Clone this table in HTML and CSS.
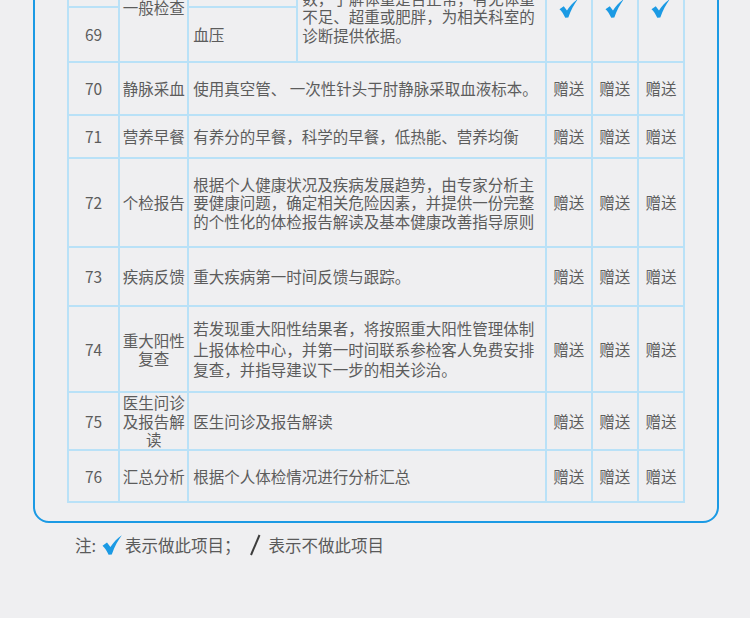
FILE: index.html
```html
<!DOCTYPE html>
<html lang="zh-CN">
<head>
  <meta charset="UTF-8">
  <meta name="viewport" content="width=device-width, initial-scale=1.0">
  <title>体检项目</title>
  <link rel="stylesheet" href="styles.css">
</head>
<body>
  <div class="page">
    <div class="panel">
      <table class="items">
        <colgroup>
          <col class="c-no">
          <col class="c-name">
          <col class="c-sub">
          <col class="c-desc">
          <col class="c-pkg">
          <col class="c-pkg">
          <col class="c-pkg">
        </colgroup>
        <tbody>
          <tr class="h55">
            <td>68</td>
            <td rowspan="2">一般检查</td>
            <td class="text">身高体重</td>
            <td class="text" rowspan="2">通过测量身高、体重，计算体重指数，了解体重是否正常，有无体重不足、超重或肥胖，为相关科室的诊断提供依据。</td>
            <td rowspan="2"><svg class="check" viewBox="0 0 20 20"><path d="M0.5 10.8L5 7.6L8.4 12C11.4 7.4 15.2 3 19.8 0.2C16.6 4.6 12.6 11 9.8 19.6L6.6 19.8C4.8 15.8 2.8 12.8 0.5 10.8Z"/></svg></td>
            <td rowspan="2"><svg class="check" viewBox="0 0 20 20"><path d="M0.5 10.8L5 7.6L8.4 12C11.4 7.4 15.2 3 19.8 0.2C16.6 4.6 12.6 11 9.8 19.6L6.6 19.8C4.8 15.8 2.8 12.8 0.5 10.8Z"/></svg></td>
            <td rowspan="2"><svg class="check" viewBox="0 0 20 20"><path d="M0.5 10.8L5 7.6L8.4 12C11.4 7.4 15.2 3 19.8 0.2C16.6 4.6 12.6 11 9.8 19.6L6.6 19.8C4.8 15.8 2.8 12.8 0.5 10.8Z"/></svg></td>
          </tr>
          <tr class="h55">
            <td>69</td>
            <td class="text">血压</td>
          </tr>
          <tr class="h53">
            <td>70</td>
            <td>静脉采血</td>
            <td class="text" colspan="2">使用真空管、 一次性针头于肘静脉采取血液标本。</td>
            <td>赠送</td><td>赠送</td><td>赠送</td>
          </tr>
          <tr class="h43">
            <td>71</td>
            <td>营养早餐</td>
            <td class="text" colspan="2">有养分的早餐，科学的早餐，低热能、营养均衡</td>
            <td>赠送</td><td>赠送</td><td>赠送</td>
          </tr>
          <tr class="h89">
            <td>72</td>
            <td>个检报告</td>
            <td class="text" colspan="2">根据个人健康状况及疾病发展趋势，由专家分析主要健康问题，确定相关危险因素，并提供一份完整的个性化的体检报告解读及基本健康改善指导原则</td>
            <td>赠送</td><td>赠送</td><td>赠送</td>
          </tr>
          <tr class="h59">
            <td>73</td>
            <td>疾病反馈</td>
            <td class="text" colspan="2">重大疾病第一时间反馈与跟踪。</td>
            <td>赠送</td><td>赠送</td><td>赠送</td>
          </tr>
          <tr class="h86">
            <td>74</td>
            <td>重大阳性复查</td>
            <td class="text loose" colspan="2">若发现重大阳性结果者，将按照重大阳性管理体制上报体检中心，并第一时间联系参检客人免费安排复查，并指导建议下一步的相关诊治。</td>
            <td>赠送</td><td>赠送</td><td>赠送</td>
          </tr>
          <tr class="h58">
            <td>75</td>
            <td>医生问诊及报告解读</td>
            <td class="text" colspan="2">医生问诊及报告解读</td>
            <td>赠送</td><td>赠送</td><td>赠送</td>
          </tr>
          <tr class="h52">
            <td>76</td>
            <td>汇总分析</td>
            <td class="text" colspan="2">根据个人体检情况进行分析汇总</td>
            <td>赠送</td><td>赠送</td><td>赠送</td>
          </tr>
        </tbody>
      </table>
    </div>

    <p class="legend">
      <span>注:</span>
      <svg class="check legend-check" viewBox="0 0 20 20"><path d="M0.5 10.8L5 7.6L8.4 12C11.4 7.4 15.2 3 19.8 0.2C16.6 4.6 12.6 11 9.8 19.6L6.6 19.8C4.8 15.8 2.8 12.8 0.5 10.8Z"/></svg>
      <span>表示做此项目；</span>
      <svg class="slash" viewBox="0 0 12 22"><line x1="10.5" y1="1" x2="2" y2="21"/></svg>
      <span>表示不做此项目</span>
    </p>
  </div>
</body>
</html>
```

FILE: styles.css
```css
html, body {
  margin: 0;
  padding: 0;
  background-color: #efeff1;
  font-family: "Noto Sans CJK SC", "Noto Sans", sans-serif;
  color: #5c5c5c;
}

.page {
  padding: 0 31px 0 33px;
}

.panel {
  margin-top: -61px;
  padding: 10px 32px 18px;
  border: 2px solid #1b9ae4;
  border-radius: 16px;
}

.items {
  width: 100%;
  border-collapse: collapse;
  table-layout: fixed;
}

.c-no { width: 51px; }
.c-name { width: 69px; }
.c-sub { width: 109px; }
.c-desc { width: 248px; }
.c-pkg { width: 46px; }

.items td {
  border: 2px solid #b9e1f7;
  padding: 0 1px;
  font-size: 15.5px;
  line-height: 18.5px;
  text-align: center;
  vertical-align: middle;
}

.items td.text {
  padding: 0 4px;
  text-align: left;
}

.items td.loose {
  line-height: 20.5px;
}

.h43 { height: 43px; }
.h52 { height: 52px; }
.h53 { height: 53px; }
.h55 { height: 55px; }
.h58 { height: 58px; }
.h59 { height: 59px; }
.h86 { height: 86px; }
.h89 { height: 89px; }

.check {
  display: inline-block;
  width: 19px;
  height: 19px;
  fill: #1b9ae4;
  vertical-align: middle;
}

.legend {
  margin: 10px 0 0;
  padding-left: 42px;
  display: flex;
  align-items: center;
  font-size: 16.5px;
  line-height: 24px;
  color: #5a5a5a;
}

.legend-check {
  width: 20px;
  height: 20px;
  margin: 0 3px 0 6px;
}

.slash {
  width: 12px;
  height: 22px;
  margin: 0 8px 0 8px;
  stroke: #3c3c3c;
  stroke-width: 2;
}
```
